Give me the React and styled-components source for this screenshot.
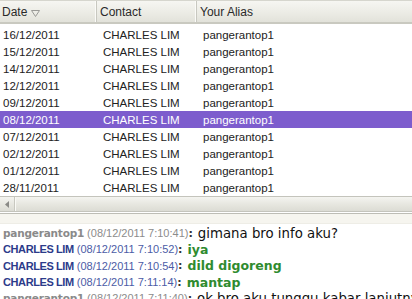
import React from "react";
import styled, { createGlobalStyle } from "styled-components";

const GlobalStyle = createGlobalStyle`
  html, body {
    margin: 0;
    padding: 0;
    background: #fff;
    overflow: hidden;
  }
  * { box-sizing: border-box; }
`;

const rows = [
  { date: "16/12/2011", contact: "CHARLES LIM", alias: "pangerantop1" },
  { date: "15/12/2011", contact: "CHARLES LIM", alias: "pangerantop1" },
  { date: "14/12/2011", contact: "CHARLES LIM", alias: "pangerantop1" },
  { date: "12/12/2011", contact: "CHARLES LIM", alias: "pangerantop1" },
  { date: "09/12/2011", contact: "CHARLES LIM", alias: "pangerantop1" },
  { date: "08/12/2011", contact: "CHARLES LIM", alias: "pangerantop1", selected: true },
  { date: "07/12/2011", contact: "CHARLES LIM", alias: "pangerantop1" },
  { date: "02/12/2011", contact: "CHARLES LIM", alias: "pangerantop1" },
  { date: "01/12/2011", contact: "CHARLES LIM", alias: "pangerantop1" },
  { date: "28/11/2011", contact: "CHARLES LIM", alias: "pangerantop1" },
];

const messages = [
  { me: true, name: "pangerantop1", time: "(08/12/2011 7:10:41)", text: "gimana bro info aku?" },
  { name: "CHARLES LIM", time: "(08/12/2011 7:10:52)", text: "iya" },
  { name: "CHARLES LIM", time: "(08/12/2011 7:10:54)", text: "dild digoreng" },
  { name: "CHARLES LIM", time: "(08/12/2011 7:11:14)", text: "mantap" },
  { me: true, name: "pangerantop1", time: "(08/12/2011 7:11:40)", text: "ok bro aku tunggu kabar lanjutnya" },
];

const Window = styled.div`
  width: 412px;
  height: 299px;
  display: flex;
  flex-direction: column;
  overflow: hidden;
  font-family: "Liberation Sans", Arial, sans-serif;
  & > * { flex-shrink: 0; }
`;

const Grid = styled.div`
  display: flex;
  flex-direction: column;
`;

const HeaderRow = styled.div`
  display: grid;
  grid-template-columns: 97px 100px 1fr;
  height: 24px;
  background: linear-gradient(#f6f6f2, #ebebe4 60%, #e2e2da);
  border-top: 1px solid #d6d6ce;
  border-bottom: 2px solid #c9c9c0;
`;

const HeaderCell = styled.div`
  display: flex;
  align-items: center;
  padding-left: ${(p) => (p.first ? "2px" : "3px")};
  font-size: 12px;
  color: #2a2a2a;
  border-right: 1px solid #c8c8c0;
  box-shadow: inset -1px 0 0 #fbfbf8;
  &:last-child {
    border-right: none;
    box-shadow: none;
  }
`;

const SortArrow = styled.svg`
  margin-left: 4px;
  margin-top: 3px;
`;

const Body = styled.div`
  padding-top: 2px;
`;

const Row = styled.div`
  display: grid;
  grid-template-columns: 100px 100px 1fr;
  height: 17px;
  align-items: center;
  font-size: 11.5px;
  color: ${(p) => (p.selected ? "#fff" : "#222")};
  background: ${(p) => (p.selected ? "#7d5dcd" : "transparent")};
`;

const Cell = styled.div`
  padding-left: 3px;
  white-space: nowrap;
`;

const ScrollBar = styled.div`
  height: 16px;
  display: flex;
  border-top: 1px solid #c4c4bc;
  border-bottom: 1px solid #c4c4bc;
  background: linear-gradient(#f4f4f0, #e6e6df 55%, #dcdcd4);
`;

const ArrowButton = styled.div`
  width: 15px;
  display: flex;
  align-items: center;
  justify-content: center;
  border-right: 1px solid #c8c8c0;
`;

const Thumb = styled.div`
  flex: 1;
  border-left: 1px solid #fafaf6;
`;

const Splitter = styled.div`
  height: 12px;
  border-top: 1px solid #fff;
  box-shadow: inset 0 1px 0 #bdbdb5;
  background: #f6f5ef;
  border-bottom: 1px solid #eeede6;
`;

const Chat = styled.div`
  flex: 1;
  flex-shrink: 1;
  min-height: 0;
  overflow: hidden;
  padding: 1px 3px 0;
  background: #fff;
`;

const Line = styled.div`
  height: 16.3px;
  display: flex;
  align-items: center;
  white-space: nowrap;
`;

const Name = styled.span`
  font-family: ${(p) => (p.me ? '"DejaVu Sans", Verdana, sans-serif' : '"Liberation Sans", Arial, sans-serif')};
  font-weight: bold;
  font-size: ${(p) => (p.me ? "10.5px" : "11px")};
  letter-spacing: ${(p) => (p.me ? "-0.2px" : "-0.4px")};
  color: ${(p) => (p.me ? "#8a8a8a" : "#2c3b8a")};
`;

const Time = styled.span`
  margin-left: 3px;
  font-size: 11px;
  color: ${(p) => (p.me ? "#8c8c8c" : "#4c5ca6")};
`;

const Colon = styled.span`
  font-family: "DejaVu Sans", Verdana, sans-serif;
  font-weight: bold;
  font-size: 11px;
  color: #333;
  margin-right: 5px;
`;

const Text = styled.span`
  font-family: "DejaVu Sans", Verdana, sans-serif;
  font-size: ${(p) => (p.me ? "13.3px" : "12.5px")};
  font-weight: ${(p) => (p.me ? "normal" : "bold")};
  color: ${(p) => (p.me ? "#111" : "#2f8b2f")};
`;

export default function App() {
  return (
    <Window>
      <GlobalStyle />
      <Grid>
        <HeaderRow>
          <HeaderCell first>
            Date
            <SortArrow width="9" height="7" viewBox="0 0 9 7">
              <path d="M0.5 0.5 L8.5 0.5 L4.5 6.5 Z" fill="none" stroke="#9a9a96" strokeWidth="1" />
            </SortArrow>
          </HeaderCell>
          <HeaderCell>Contact</HeaderCell>
          <HeaderCell>Your Alias</HeaderCell>
        </HeaderRow>
        <Body>
          {rows.map((r) => (
            <Row key={r.date} selected={r.selected}>
              <Cell>{r.date}</Cell>
              <Cell>{r.contact}</Cell>
              <Cell>{r.alias}</Cell>
            </Row>
          ))}
        </Body>
      </Grid>
      <ScrollBar>
        <ArrowButton>
          <svg width="4" height="7" viewBox="0 0 4 7">
            <path d="M4 0 L0 3.5 L4 7 Z" fill="#8a8a86" />
          </svg>
        </ArrowButton>
        <Thumb />
      </ScrollBar>
      <Splitter />
      <Chat>
        {messages.map((m, i) => (
          <Line key={i}>
            <Name me={m.me}>{m.name}</Name>
            <Time me={m.me}>{m.time}</Time>
            <Colon>:</Colon>
            <Text me={m.me}>{m.text}</Text>
          </Line>
        ))}
      </Chat>
    </Window>
  );
}
